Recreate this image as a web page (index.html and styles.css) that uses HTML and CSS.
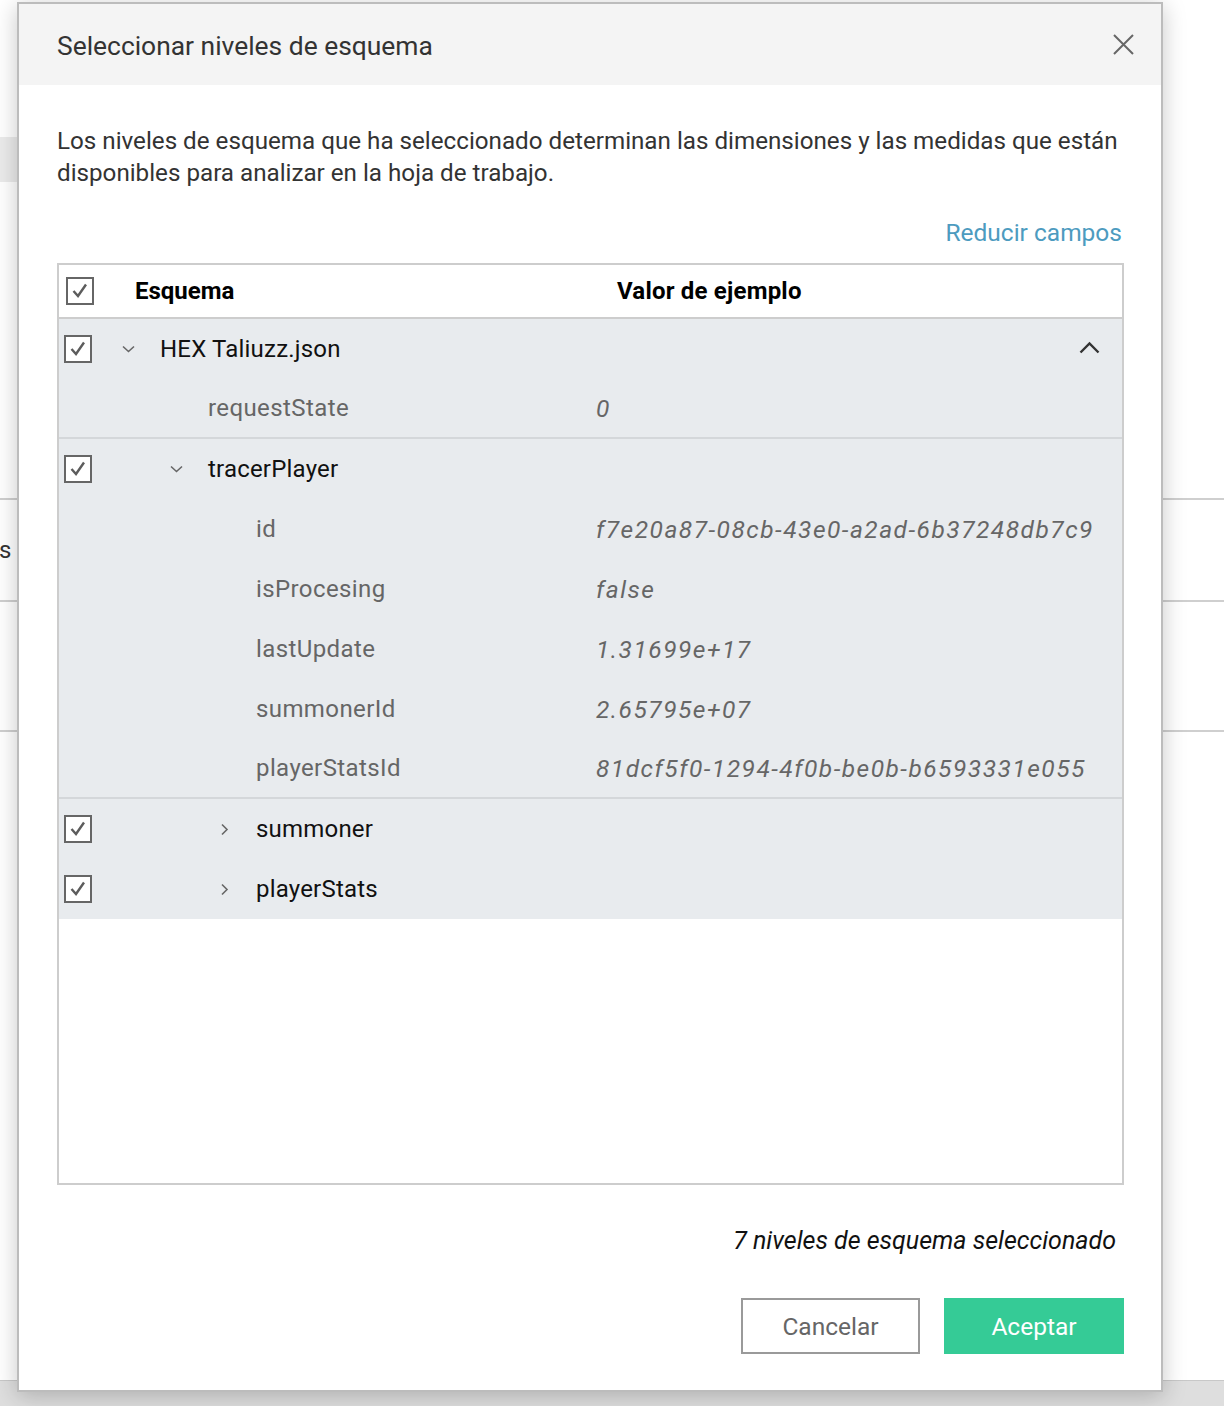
FILE: index.html
```html
<!DOCTYPE html>
<html lang="es">
<head>
<meta charset="utf-8">
<title>Seleccionar niveles de esquema</title>
<link rel="stylesheet" href="styles.css">
</head>
<body>
<div class="page">
  <div class="bg-gap bg-gap-top"></div>
  <div class="bg-band"></div>
  <div class="bg-gap bg-gap-mid"></div>
  <div class="bg-line"></div>
  <div class="bg-row bg-row-a"><span class="bg-text">s</span></div>
  <div class="bg-line"></div>
  <div class="bg-row bg-row-b"></div>
  <div class="bg-line"></div>
  <div class="bg-fill"></div>
  <div class="bg-bottom"></div>
</div>

<div class="dialog">
  <div class="dialog-header">
    <div class="dialog-title">Seleccionar niveles de esquema</div>
    <svg class="close-icon" width="21" height="21" viewBox="0 0 21 21"><path d="M1 1 L20 20 M20 1 L1 20" stroke="#666" stroke-width="2" fill="none"/></svg>
  </div>
  <div class="dialog-body">
    <p class="desc">Los niveles de esquema que ha seleccionado determinan las dimensiones y las medidas que están disponibles para analizar en la hoja de trabajo.</p>
    <div class="link-row"><span class="link">Reducir campos</span></div>

    <div class="table">
      <div class="thead">
        <div class="th-check"><span class="checkbox"><svg width="24" height="24" viewBox="0 0 24 24"><path d="M5.5 12 L10 17 L18 5.5" stroke="#5c5c5c" stroke-width="2.4" fill="none"/></svg></span></div>
        <div class="th-name">Esquema</div>
        <div class="th-value">Valor de ejemplo</div>
      </div>

      <div class="group">
        <div class="row">
          <div class="cell-check"><span class="checkbox"><svg width="24" height="24" viewBox="0 0 24 24"><path d="M5.5 12 L10 17 L18 5.5" stroke="#5c5c5c" stroke-width="2.4" fill="none"/></svg></span></div>
          <div class="cell-tree lvl0"><span class="chev"><svg width="15" height="8" viewBox="0 0 15 8"><path d="M2 1.5 L7.5 6.5 L13 1.5" stroke="#666" stroke-width="1.6" fill="none"/></svg></span><span class="name">HEX Taliuzz.json</span></div>
          <div class="cell-value"></div>
          <svg class="collapse-icon" width="21" height="13" viewBox="0 0 21 13"><path d="M1.5 11.5 L10.5 2.5 L19.5 11.5" stroke="#333" stroke-width="2.4" fill="none"/></svg>
        </div>
        <div class="row row-last">
          <div class="cell-check"></div>
          <div class="cell-tree lvl1"><span class="chev"></span><span class="leaf">requestState</span></div>
          <div class="cell-value">0</div>
        </div>
      </div>

      <div class="group">
        <div class="row">
          <div class="cell-check"><span class="checkbox"><svg width="24" height="24" viewBox="0 0 24 24"><path d="M5.5 12 L10 17 L18 5.5" stroke="#5c5c5c" stroke-width="2.4" fill="none"/></svg></span></div>
          <div class="cell-tree lvl1"><span class="chev"><svg width="15" height="8" viewBox="0 0 15 8"><path d="M2 1.5 L7.5 6.5 L13 1.5" stroke="#666" stroke-width="1.6" fill="none"/></svg></span><span class="name">tracerPlayer</span></div>
          <div class="cell-value"></div>
        </div>
        <div class="row">
          <div class="cell-check"></div>
          <div class="cell-tree lvl2"><span class="chev"></span><span class="leaf">id</span></div>
          <div class="cell-value">f7e20a87-08cb-43e0-a2ad-6b37248db7c9</div>
        </div>
        <div class="row">
          <div class="cell-check"></div>
          <div class="cell-tree lvl2"><span class="chev"></span><span class="leaf">isProcesing</span></div>
          <div class="cell-value">false</div>
        </div>
        <div class="row">
          <div class="cell-check"></div>
          <div class="cell-tree lvl2"><span class="chev"></span><span class="leaf">lastUpdate</span></div>
          <div class="cell-value">1.31699e+17</div>
        </div>
        <div class="row">
          <div class="cell-check"></div>
          <div class="cell-tree lvl2"><span class="chev"></span><span class="leaf">summonerId</span></div>
          <div class="cell-value">2.65795e+07</div>
        </div>
        <div class="row row-last">
          <div class="cell-check"></div>
          <div class="cell-tree lvl2"><span class="chev"></span><span class="leaf">playerStatsId</span></div>
          <div class="cell-value">81dcf5f0-1294-4f0b-be0b-b6593331e055</div>
        </div>
      </div>

      <div class="group group-end">
        <div class="row">
          <div class="cell-check"><span class="checkbox"><svg width="24" height="24" viewBox="0 0 24 24"><path d="M5.5 12 L10 17 L18 5.5" stroke="#5c5c5c" stroke-width="2.4" fill="none"/></svg></span></div>
          <div class="cell-tree lvl2"><span class="chev"><svg width="15" height="15" viewBox="0 0 15 15"><path d="M5 2.5 L10 7.5 L5 12.5" stroke="#666" stroke-width="1.6" fill="none"/></svg></span><span class="name">summoner</span></div>
          <div class="cell-value"></div>
        </div>
        <div class="row">
          <div class="cell-check"><span class="checkbox"><svg width="24" height="24" viewBox="0 0 24 24"><path d="M5.5 12 L10 17 L18 5.5" stroke="#5c5c5c" stroke-width="2.4" fill="none"/></svg></span></div>
          <div class="cell-tree lvl2"><span class="chev"><svg width="15" height="15" viewBox="0 0 15 15"><path d="M5 2.5 L10 7.5 L5 12.5" stroke="#666" stroke-width="1.6" fill="none"/></svg></span><span class="name">playerStats</span></div>
          <div class="cell-value"></div>
        </div>
      </div>
    </div>

    <div class="summary">7 niveles de esquema seleccionado</div>
    <div class="actions">
      <button class="btn btn-cancel">Cancelar</button>
      <button class="btn btn-ok">Aceptar</button>
    </div>
  </div>
</div>
</body>
</html>
```

FILE: styles.css
```css
html, body {
  margin: 0;
  padding: 0;
  background: #ffffff;
}
body {
  font-family: Roboto, "Liberation Sans", sans-serif;
  color: #333;
  position: relative;
  width: 1224px;
  height: 1406px;
  overflow: hidden;
}

/* background page */
.page {
  display: flex;
  flex-direction: column;
  height: 1406px;
}
.bg-gap-top { height: 137px; }
.bg-band { height: 45px; width: 300px; background: #ebebeb; }
.bg-gap-mid { height: 316px; }
.bg-line { height: 2px; background: #cfcfcf; }
.bg-row-a { height: 100px; display: flex; align-items: center; }
.bg-row-b { height: 128px; }
.bg-text { font-size: 24px; color: #333; margin-left: -1px; }
.bg-fill { flex: 1; }
.bg-bottom { height: 25px; background: #dedede; border-top: 1px solid #c8c8c8; }

/* dialog */
.dialog {
  position: absolute;
  left: 17px;
  top: 2px;
  width: 1146px;
  height: 1390px;
  box-sizing: border-box;
  border: 2px solid #bcbcbc;
  background: #fff;
  box-shadow: 0 4px 22px rgba(0, 0, 0, 0.22);
  display: flex;
  flex-direction: column;
}
.dialog-header {
  height: 81px;
  flex: none;
  background: #f4f4f4;
  display: flex;
  align-items: center;
  justify-content: space-between;
  padding: 0 27px 0 38px;
}
.dialog-title {
  font-size: 26.4px;
  color: #333;
  margin-top: 2px;
}
.close-icon { display: block; }

.dialog-body {
  padding: 0 37px 0 38px;
  display: flex;
  flex-direction: column;
}
.desc {
  margin: 40px 0 0;
  font-size: 24.2px;
  line-height: 32px;
  color: #333;
}
.link-row {
  margin-top: 28px;
  text-align: right;
  padding-right: 2px;
  line-height: 32px;
}
.link {
  font-size: 24.5px;
  color: #4d9bbf;
}

/* table */
.table {
  margin-top: 11px;
  height: 922px;
  box-sizing: border-box;
  border: 2px solid #cdcdcd;
  display: flex;
  flex-direction: column;
}
.thead {
  height: 54px;
  flex: none;
  box-sizing: border-box;
  border-bottom: 2px solid #cdcdcd;
  display: flex;
  align-items: center;
  font-weight: 700;
  font-size: 24px;
  color: #000;
}
.th-check { width: 76px; padding-left: 7px; box-sizing: border-box; display: flex; }
.th-name { width: 482px; }
.th-value { flex: 1; letter-spacing: 0.2px; }

.checkbox {
  width: 28px;
  height: 28px;
  box-sizing: border-box;
  border: 2px solid #666;
  background: #fff;
  display: flex;
  align-items: center;
  justify-content: center;
}
.checkbox svg { display: block; }

.group { background: #e8ebee; }
.row {
  height: 60px;
  box-sizing: border-box;
  display: flex;
  align-items: center;
  font-size: 24px;
}
.row-last { border-bottom: 2px solid #d4d7da; }
.cell-check { width: 33px; padding-left: 5px; box-sizing: border-box; display: flex; flex: none; }
.cell-tree {
  width: 504px;
  flex: none;
  box-sizing: border-box;
  display: flex;
  align-items: center;
}
.lvl0 { padding-left: 29px; }
.lvl1 { padding-left: 77px; }
.lvl2 { padding-left: 125px; }
.chev { width: 39px; flex: none; display: flex; align-items: center; }
.chev svg { display: block; }
.name { color: #111; letter-spacing: 0.2px; }
.leaf { color: #666; letter-spacing: 0.4px; }
.cell-value {
  flex: 1;
  font-style: italic;
  font-size: 24.5px;
  letter-spacing: 1.5px;
  color: #666;
}
.collapse-icon { display: block; margin-right: 22px; margin-top: -3px; }

/* footer */
.summary {
  margin-top: 40px;
  text-align: right;
  padding-right: 8px;
  line-height: 32px;
  font-size: 25px;
  font-style: italic;
  color: #111;
}
.actions {
  margin-top: 41px;
  display: flex;
  justify-content: flex-end;
  gap: 24px;
}
.btn {
  height: 56px;
  width: 180px;
  box-sizing: border-box;
  font-family: Roboto, "Liberation Sans", sans-serif;
  font-size: 24.5px;
  cursor: pointer;
}
.btn-cancel {
  width: 179px;
  background: #fff;
  border: 2px solid #9a9a9a;
  color: #666;
}
.btn-ok {
  background: #35cb96;
  border: none;
  color: #fff;
}
```
